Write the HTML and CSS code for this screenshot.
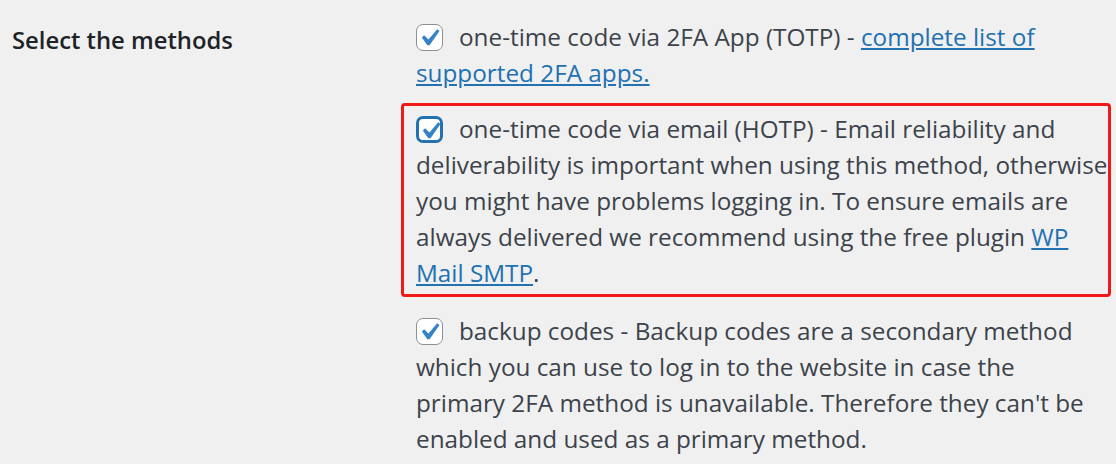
FILE: index.html
```html
<!DOCTYPE html>
<html lang="en">
<head>
    <meta charset="UTF-8">
    <title>Two-Factor Settings</title>
    <link rel="stylesheet" href="styles.css">
</head>
<body>

<div class="form-row">
    <div class="row-label">Select the methods</div>

    <div class="methods">
        <label class="method">
            <span class="check">
                <svg viewBox="0 0 20 20"><path d="M14.83 4.89l1.34.94-5.81 8.38H9.02L5.78 9.67l1.34-1.25 2.57 2.4z"/></svg>
            </span>one-time code via 2FA App (TOTP) - <a href="#">complete list of<br>supported 2FA apps.</a>
        </label>

        <label class="method highlighted">
            <span class="check focused">
                <svg viewBox="0 0 20 20"><path d="M14.83 4.89l1.34.94-5.81 8.38H9.02L5.78 9.67l1.34-1.25 2.57 2.4z"/></svg>
            </span>one-time code via email (HOTP) - Email reliability and<br>deliverability is important when using this method, otherwise<br>you might have problems logging in. To ensure emails are<br>always delivered we recommend using the free plugin <a href="#">WP<br>Mail SMTP</a>.
        </label>

        <label class="method">
            <span class="check">
                <svg viewBox="0 0 20 20"><path d="M14.83 4.89l1.34.94-5.81 8.38H9.02L5.78 9.67l1.34-1.25 2.57 2.4z"/></svg>
            </span>backup codes - Backup codes are a secondary method<br>which you can use to log in to the website in case the<br>primary 2FA method is unavailable. Therefore they can't be<br>enabled and used as a primary method.
        </label>
    </div>
</div>

</body>
</html>
```

FILE: styles.css
```css
/* settings row, screenshot is zoomed ~1.7x */
body {
    margin: 0;
    background-color: #f0f0f1;
    font-family: "Open Sans", "Noto Sans", sans-serif;
    font-size: 24.3px;
    line-height: 36px;
    color: #3c434a;
}

.form-row {
    display: grid;
    grid-template-columns: 401px 710px;
    padding-top: 11px;
}

.row-label {
    padding: 11px 0 0 12px;
    font-size: 23.8px;
    font-weight: 600;
    color: #1d2327;
}

.methods {
    display: flex;
    flex-direction: column;
    gap: 6px;
}

.method {
    display: block;
    white-space: nowrap;
    border: 3px solid transparent;
    border-radius: 4px;
    padding: 5px 1px 3px 12px;
}

.method.highlighted {
    border-color: #f01818;
    margin-bottom: 2px;
}

.check {
    display: inline-block;
    width: 27px;
    height: 27px;
    box-sizing: border-box;
    border: 1.7px solid #8c8f94;
    border-radius: 7px;
    background-color: #fff;
    margin-right: 16px;
    vertical-align: -5px;
}

.check svg {
    display: block;
    width: 34px;
    height: 34px;
    margin: -4px 0 0 -5px;
    fill: #3582c4;
}

.check.focused {
    border: 3px solid #2271b1;
}

.check.focused svg {
    margin: -5px 0 0 -6px;
}

a {
    color: #2271b1;
    text-decoration: underline;
}
```
